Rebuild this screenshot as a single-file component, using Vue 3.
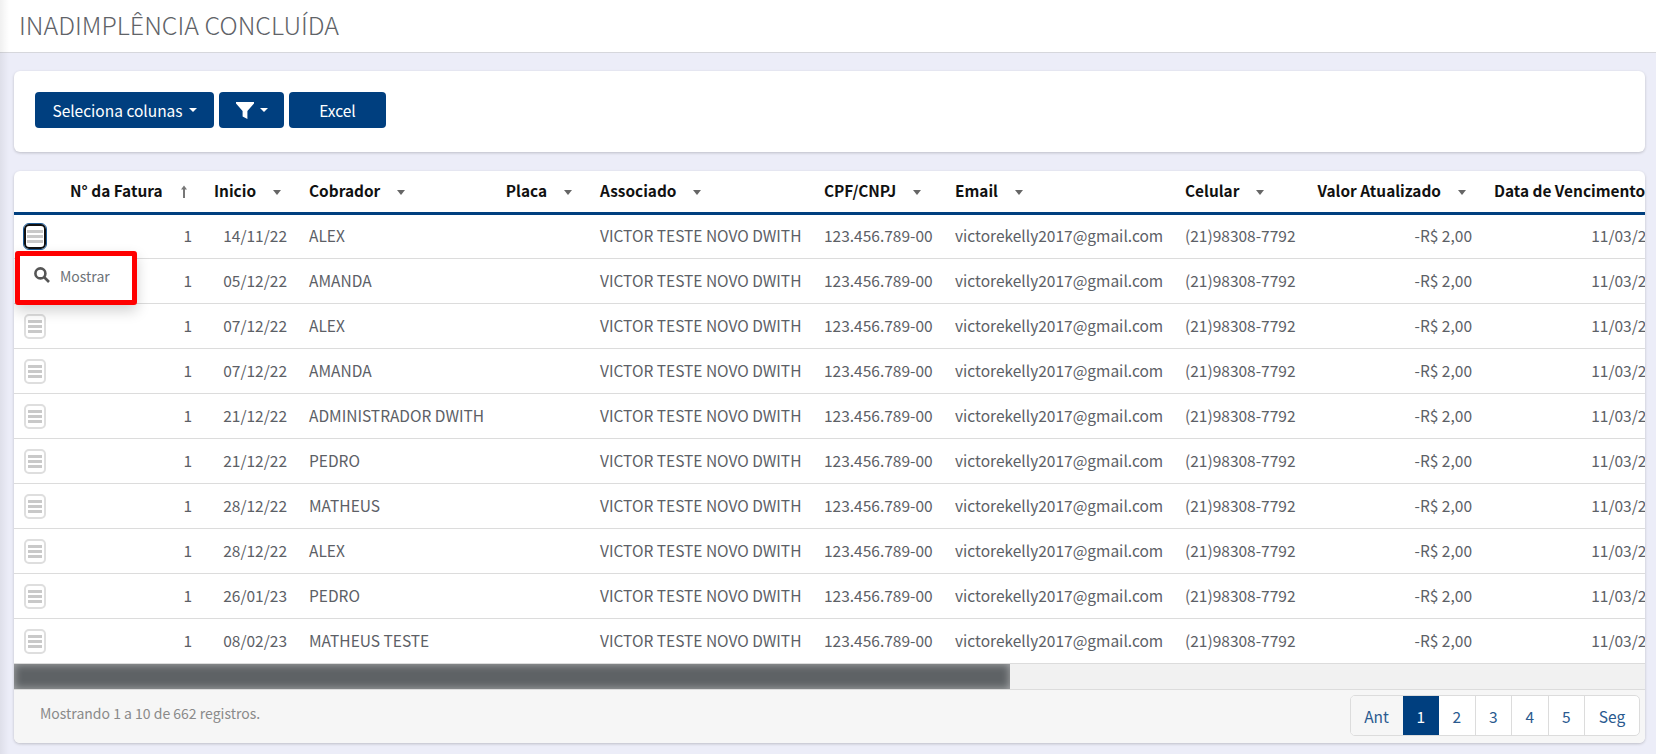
<template>
  <div class="page">
    <header class="page-header">
      <h1 class="page-title">INADIMPLÊNCIA CONCLUÍDA</h1>
    </header>

    <main class="content">
      <section class="card toolbar">
        <button class="btn btn-columns">Seleciona colunas <span class="caret" /></button>
        <button class="btn btn-filter">
          <svg class="filter-icon" viewBox="0 0 18 17">
            <path d="M0 0h18v1.6L11.4 9v8L6.6 14.6V9L0 1.6z" />
          </svg>
          <span class="caret" />
        </button>
        <button class="btn btn-excel">Excel</button>
      </section>

      <section class="card table-card">
        <div class="table-wrap">
          <table class="data-table">
            <colgroup>
              <col v-for="c in columns" :key="c.key" :style="{ width: c.width + 'px' }" />
            </colgroup>
            <thead>
              <tr>
                <th v-for="c in columns" :key="c.key" :class="c.headClass">
                  <span v-if="c.label" class="th-label">{{ c.label }}</span>
                  <svg v-if="c.sort === 'up'" class="sort-up" viewBox="0 0 8 14">
                    <path d="M4 0.5 7 4.5H5V13H3V4.5H1z" />
                  </svg>
                  <span v-else-if="c.sort" class="sort-down" />
                </th>
              </tr>
            </thead>
            <tbody>
              <tr v-for="(r, i) in rows" :key="i">
                <td class="cell-menu">
                  <span class="menu-btn" :class="{ focused: i === 0 }">
                    <i /><i /><i />
                  </span>
                </td>
                <td class="right">1</td>
                <td class="right">{{ r.date }}</td>
                <td>{{ r.name }}</td>
                <td></td>
                <td>VICTOR TESTE NOVO DWITH</td>
                <td>123.456.789-00</td>
                <td>victorekelly2017@gmail.com</td>
                <td>(21)98308-7792</td>
                <td class="right">-R$ 2,00</td>
                <td class="right">11/03/23</td>
              </tr>
            </tbody>
          </table>

          <div class="row-menu">
            <svg class="search-icon" viewBox="0 0 16 16">
              <circle cx="6.4" cy="6.4" r="5" />
              <path d="M10 10 15 15" />
            </svg>
            <span>Mostrar</span>
          </div>
        </div>

        <div class="scroll-track"><div class="scroll-thumb" /></div>

        <footer class="table-footer">
          <span class="records">Mostrando 1 a 10 de 662 registros.</span>
          <nav class="pagination">
            <a v-for="p in pages" :key="p" class="page-link" :class="{ active: p === '1' }">{{ p }}</a>
          </nav>
        </footer>
      </section>
    </main>
  </div>
</template>

<script setup>
const columns = [
  { key: 'menu', width: 46, label: '' },
  { key: 'fatura', width: 143, label: 'N° da Fatura', sort: 'up', headClass: 'th-fatura' },
  { key: 'inicio', width: 95, label: 'Inicio', sort: 'down' },
  { key: 'cobrador', width: 190, label: 'Cobrador', sort: 'down' },
  { key: 'placa', width: 101, label: 'Placa', sort: 'down', headClass: 'th-end' },
  { key: 'associado', width: 224, label: 'Associado', sort: 'down' },
  { key: 'cpf', width: 131, label: 'CPF/CNPJ', sort: 'down' },
  { key: 'email', width: 230, label: 'Email', sort: 'down' },
  { key: 'celular', width: 132, label: 'Celular', sort: 'down' },
  { key: 'valor', width: 177, label: 'Valor Atualizado', sort: 'down', headClass: 'th-end' },
  { key: 'venc', width: 183, label: 'Data de Vencimento', headClass: 'th-venc' }
]

const rows = [
  { date: '14/11/22', name: 'ALEX' },
  { date: '05/12/22', name: 'AMANDA' },
  { date: '07/12/22', name: 'ALEX' },
  { date: '07/12/22', name: 'AMANDA' },
  { date: '21/12/22', name: 'ADMINISTRADOR DWITH' },
  { date: '21/12/22', name: 'PEDRO' },
  { date: '28/12/22', name: 'MATHEUS' },
  { date: '28/12/22', name: 'ALEX' },
  { date: '26/01/23', name: 'PEDRO' },
  { date: '08/02/23', name: 'MATHEUS TESTE' }
]

const pages = ['Ant', '1', '2', '3', '4', '5', 'Seg']
</script>

<style>
html,
body {
  margin: 0;
  background: #ecedf8;
}
</style>

<style scoped>
.page {
  position: relative;
  height: 754px;
  overflow: hidden;
  background: #ecedf8;
  font-family: "Noto Sans CJK SC", "Source Sans Pro", "Noto Sans", sans-serif;
  font-size: 15.5px;
  color: #5c6066;
}

.page::before {
  content: "";
  position: absolute;
  left: 0;
  top: 0;
  bottom: 0;
  width: 9px;
  background: linear-gradient(90deg, rgba(0, 0, 0, 0.06), rgba(0, 0, 0, 0));
  pointer-events: none;
}

.page-header {
  height: 52px;
  box-sizing: content-box;
  background: #fff;
  border-bottom: 1px solid #d6d7dc;
  padding-left: 19px;
  display: flex;
  align-items: center;
}

.page-title {
  margin: 0 0 4px;
  font-size: 25px;
  font-weight: 300;
  color: #5f6368;
}

.content {
  padding: 18px 11px 0 14px;
  display: flex;
  flex-direction: column;
  gap: 19px;
}

.card {
  background: #fff;
  border-radius: 6px;
  box-shadow: 0 1px 3px rgba(0, 0, 0, 0.2);
}

.toolbar {
  height: 81px;
  padding: 21px;
  box-sizing: border-box;
  display: flex;
  gap: 5px;
}

.btn {
  height: 36px;
  border: none;
  border-radius: 4px;
  background: #003f7f;
  color: #fff;
  font: inherit;
  padding: 0;
  display: flex;
  align-items: center;
  justify-content: center;
}

.btn-columns {
  width: 179px;
  gap: 6px;
}

.btn-filter {
  width: 65px;
  gap: 6px;
}

.btn-excel {
  width: 97px;
}

.caret {
  width: 0;
  height: 0;
  border-left: 4px solid transparent;
  border-right: 4px solid transparent;
  border-top: 4px solid #fff;
}

.filter-icon {
  width: 18px;
  height: 17px;
  fill: #fff;
}

.table-card {
  height: 572px;
  overflow: hidden;
  display: flex;
  flex-direction: column;
}

.table-wrap {
  position: relative;
  height: 493px;
  overflow: hidden;
}

.data-table {
  width: 1652px;
  table-layout: fixed;
  border-collapse: separate;
  border-spacing: 0;
}

.data-table th {
  height: 44px;
  padding: 0 0 4px 11px;
  box-sizing: border-box;
  text-align: left;
  font-weight: 700;
  font-size: 15.4px;
  color: #111;
  border-bottom: 3px solid #003f7f;
  white-space: nowrap;
}

.data-table td {
  height: 45px;
  padding: 0 11px 3px;
  box-sizing: border-box;
  border-bottom: 1px solid #dcdcdc;
  white-space: nowrap;
}

.data-table tbody tr:first-child td {
  height: 44px;
}

.data-table td.right {
  text-align: right;
}

.data-table td.cell-menu {
  padding: 0 0 0 10px;
}

.th-label {
  margin-right: 17px;
}

.data-table th.th-fatura {
  padding-left: 10px;
}

.data-table th.th-end {
  text-align: right;
  padding-right: 17px;
}

.th-venc .th-label {
  margin-right: 0;
}

.sort-down {
  display: inline-block;
  vertical-align: middle;
  width: 0;
  height: 0;
  border-left: 4px solid transparent;
  border-right: 4px solid transparent;
  border-top: 5px solid #666;
}

.sort-up {
  width: 8px;
  height: 14px;
  vertical-align: middle;
  fill: #777;
}

.menu-btn {
  width: 22px;
  height: 25px;
  box-sizing: border-box;
  border: 2px solid #dedede;
  border-radius: 5px;
  display: flex;
  flex-direction: column;
  justify-content: center;
  align-items: center;
  gap: 2px;
}

.menu-btn i {
  width: 14px;
  height: 3px;
  background: #c9c9c9;
}

.menu-btn.focused {
  border-color: #111;
  outline: 1px solid #1d5a94;
}

.menu-btn.focused i {
  width: 16px;
}

.row-menu {
  position: absolute;
  left: 1px;
  top: 80px;
  width: 122px;
  height: 54px;
  box-sizing: border-box;
  border: 5px solid #f00;
  border-radius: 3px;
  background: #fff;
  box-shadow: 0 6px 14px rgba(0, 0, 0, 0.18);
  display: flex;
  align-items: flex-start;
  padding: 10px 0 0 14px;
  gap: 10px;
  font-size: 14px;
  color: #6d7278;
}

.search-icon {
  width: 16px;
  height: 16px;
  fill: none;
  stroke: #555;
  stroke-width: 2.6;
  margin-top: 1px;
}

.scroll-track {
  height: 25px;
  background: #f1f1f1;
}

.scroll-thumb {
  width: 996px;
  height: 100%;
  background: #5e6265;
  box-shadow: inset 0 0 8px rgba(255, 255, 255, 0.5);
}

.table-footer {
  flex: 1;
  background: #f6f6f6;
  border-top: 1px solid #dcdcdc;
  display: flex;
  align-items: flex-start;
  justify-content: space-between;
  padding: 5px 5px 0 26px;
}

.records {
  margin-top: 8px;
  font-size: 14px;
  color: #8a8a8a;
}

.pagination {
  display: flex;
  height: 41px;
  box-sizing: border-box;
  border: 1px solid #dcdcdc;
  border-radius: 5px;
  background: #fff;
  overflow: hidden;
}

.page-link {
  width: 36.5px;
  display: flex;
  align-items: center;
  justify-content: center;
  color: #2a5a8f;
  border-right: 1px solid #dcdcdc;
  box-sizing: border-box;
}

.page-link:first-child {
  width: 52px;
  background: #f6f6f6;
  border-right: none;
}

.page-link:last-child {
  width: 54px;
  border-right: none;
}

.page-link.active {
  background: #003f7f;
  color: #fff;
  border-right: none;
}
</style>
